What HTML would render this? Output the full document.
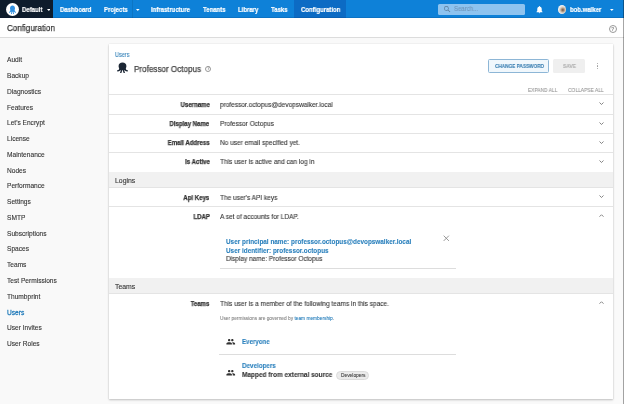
<!DOCTYPE html>
<html><head><meta charset="utf-8">
<style>
*{box-sizing:border-box;margin:0;padding:0}
html,body{width:624px;height:404px;overflow:hidden;background:#f9f9f9;font-family:"Liberation Sans",sans-serif;color:#333;position:relative}
.r{position:absolute}
.t{position:absolute;line-height:1;white-space:nowrap;-webkit-text-stroke:0.1px currentColor;will-change:transform}
</style></head><body>
<div class="r" style="left:0px;top:0px;width:624px;height:18px;background:#0e81d8;"></div>
<div class="r" style="left:0px;top:0px;width:53px;height:18px;background:#0e1c2c;"></div>
<div class="r" style="left:294px;top:0px;width:52px;height:18px;background:#0c6bc4;"></div>
<div class="r" style="left:131.5px;top:0px;width:0.7px;height:18px;background:rgba(0,0,0,0.09);"></div>
<div class="r" style="left:0px;top:17px;width:624px;height:1px;background:rgba(0,20,60,0.12);"></div>
<div class="r" style="left:6.1px;top:3.3px;width:12.9px;height:12.9px;border-radius:50%;background:#fff"></div>
<svg class="r" style="left:9.4px;top:5.0px" width="7.0" height="9.4" viewBox="0 0 20 22" preserveAspectRatio="none"><path fill="#2f8fe0" d="M10 1C5.8 1 2.9 3.8 2.9 7.8c0 2.6 1 4 1.6 5.4L5 16H15l.5-2.8c.6-1.4 1.6-2.8 1.6-5.4C17.1 3.8 14.2 1 10 1z"/><g fill="none" stroke="#2f8fe0" stroke-width="2.5" stroke-linecap="round"><path d="M5.2 13c0 2.6-1.4 3.8-4 4"/><path d="M8.2 14c0 3-.4 4.8-1.3 6.5"/><path d="M11.8 14c0 3 .4 4.8 1.3 6.5"/><path d="M14.8 13c0 2.6 1.4 3.8 4 4"/></g></svg>
<div class="t" style="left:22.00px;top:5.67px;font-size:7px;font-weight:bold;color:#fff;transform:scaleX(0.857);transform-origin:left center;-webkit-text-stroke:0.2px #fff;">Default</div>
<svg class="r" style="left:46.5px;top:8.6px" width="3.6" height="2.0" viewBox="0 0 10 5.5"><path d="M0 0h10L5 5.5z" fill="#fff"/></svg>
<div class="t" style="left:59.60px;top:5.77px;font-size:7px;font-weight:bold;color:#fff;transform:scaleX(0.857);transform-origin:left center;-webkit-text-stroke:0.2px #fff;">Dashboard</div>
<div class="t" style="left:103.60px;top:5.77px;font-size:7px;font-weight:bold;color:#fff;transform:scaleX(0.857);transform-origin:left center;-webkit-text-stroke:0.2px #fff;">Projects</div>
<div class="t" style="left:150.80px;top:5.77px;font-size:7px;font-weight:bold;color:#fff;transform:scaleX(0.857);transform-origin:left center;-webkit-text-stroke:0.2px #fff;">Infrastructure</div>
<div class="t" style="left:203.00px;top:5.77px;font-size:7px;font-weight:bold;color:#fff;transform:scaleX(0.857);transform-origin:left center;-webkit-text-stroke:0.2px #fff;">Tenants</div>
<div class="t" style="left:238.30px;top:5.77px;font-size:7px;font-weight:bold;color:#fff;transform:scaleX(0.857);transform-origin:left center;-webkit-text-stroke:0.2px #fff;">Library</div>
<div class="t" style="left:271.20px;top:5.77px;font-size:7px;font-weight:bold;color:#fff;transform:scaleX(0.857);transform-origin:left center;-webkit-text-stroke:0.2px #fff;">Tasks</div>
<div class="t" style="left:300.80px;top:5.77px;font-size:7px;font-weight:bold;color:#fff;transform:scaleX(0.857);transform-origin:left center;-webkit-text-stroke:0.2px #fff;">Configuration</div>
<svg class="r" style="left:136.2px;top:8.6px" width="3.6" height="2.0" viewBox="0 0 10 5.5"><path d="M0 0h10L5 5.5z" fill="#fff"/></svg>
<div class="r" style="left:438.3px;top:3.5px;width:86.6px;height:11.7px;background:#8ec3ef;border-radius:1.5px;"></div>
<svg class="r" style="left:442.6px;top:4.9px" width="8.6" height="8.6" viewBox="0 0 24 24"><path fill="#587a98" d="M15.5 14h-.79l-.28-.27A6.47 6.47 0 0 0 16 9.5 6.5 6.5 0 1 0 9.5 16c1.61 0 3.09-.59 4.23-1.57l.27.28v.79l5 4.99L20.49 19l-4.99-5zm-6 0C7.01 14 5 11.99 5 9.5S7.01 5 9.5 5 14 7.01 14 9.5 11.99 14 9.5 14z"/></svg>
<div class="t" style="left:454.00px;top:6.31px;font-size:6.6px;font-weight:normal;color:#6e95ba;transform:scaleX(0.91);transform-origin:left center;">Search...</div>
<svg class="r" style="left:535px;top:5.3px" width="9" height="9" viewBox="0 0 24 24"><path fill="#fff" d="M12 22c1.1 0 2-.9 2-2h-4c0 1.1.89 2 2 2zm6-6v-5c0-3.07-1.64-5.64-4.5-6.32V4c0-.83-.67-1.5-1.5-1.5s-1.5.67-1.5 1.5v.68C7.63 5.36 6 7.92 6 11v5l-2 2v1h16v-1l-2-2z"/></svg>
<div class="r" style="left:557.6px;top:4.6px;width:8.6px;height:9.2px;border-radius:50%;background:radial-gradient(circle at 60% 55%,#6b5243 0,#a08670 18%,#d8cbbb 40%,#eef1f4 62%,#e4ecf3 100%)"></div>
<div class="t" style="left:569.50px;top:5.77px;font-size:7px;font-weight:bold;color:#fff;transform:scaleX(0.857);transform-origin:left center;-webkit-text-stroke:0.2px #fff;">bob.walker</div>
<svg class="r" style="left:610.4px;top:8.8px" width="3.6" height="2.0" viewBox="0 0 10 5.5"><path d="M0 0h10L5 5.5z" fill="#fff"/></svg>
<div class="r" style="left:0px;top:18px;width:624px;height:19px;background:#fff;"></div>
<div class="r" style="left:0px;top:36.5px;width:624px;height:1px;background:#dcdcdc;"></div>
<div class="t" style="left:6.70px;top:24.15px;font-size:8.8px;font-weight:normal;color:#333;transform:scaleX(0.915);transform-origin:left center;-webkit-text-stroke:0.25px #333;">Configuration</div>
<div class="r" style="left:608.6px;top:24.8px;width:8px;height:8px;border-radius:50%;border:0.75px solid #999"></div>
<div class="t" style="left:610.90px;top:26.54px;font-size:5.5px;font-weight:bold;color:#999;">?</div>
<div class="t" style="left:6.80px;top:57.21px;font-size:6.6px;font-weight:normal;color:#333;">Audit</div>
<div class="t" style="left:6.80px;top:72.98px;font-size:6.6px;font-weight:normal;color:#333;">Backup</div>
<div class="t" style="left:6.80px;top:88.75px;font-size:6.6px;font-weight:normal;color:#333;">Diagnostics</div>
<div class="t" style="left:6.80px;top:104.52px;font-size:6.6px;font-weight:normal;color:#333;">Features</div>
<div class="t" style="left:6.80px;top:120.29px;font-size:6.6px;font-weight:normal;color:#333;">Let's Encrypt</div>
<div class="t" style="left:6.80px;top:136.06px;font-size:6.6px;font-weight:normal;color:#333;">License</div>
<div class="t" style="left:6.80px;top:151.83px;font-size:6.6px;font-weight:normal;color:#333;">Maintenance</div>
<div class="t" style="left:6.80px;top:167.60px;font-size:6.6px;font-weight:normal;color:#333;">Nodes</div>
<div class="t" style="left:6.80px;top:183.37px;font-size:6.6px;font-weight:normal;color:#333;">Performance</div>
<div class="t" style="left:6.80px;top:199.14px;font-size:6.6px;font-weight:normal;color:#333;">Settings</div>
<div class="t" style="left:6.80px;top:214.91px;font-size:6.6px;font-weight:normal;color:#333;">SMTP</div>
<div class="t" style="left:6.80px;top:230.68px;font-size:6.6px;font-weight:normal;color:#333;">Subscriptions</div>
<div class="t" style="left:6.80px;top:246.45px;font-size:6.6px;font-weight:normal;color:#333;">Spaces</div>
<div class="t" style="left:6.80px;top:262.22px;font-size:6.6px;font-weight:normal;color:#333;">Teams</div>
<div class="t" style="left:6.80px;top:277.99px;font-size:6.6px;font-weight:normal;color:#333;">Test Permissions</div>
<div class="t" style="left:6.80px;top:293.76px;font-size:6.6px;font-weight:normal;color:#333;">Thumbprint</div>
<div class="t" style="left:6.80px;top:309.53px;font-size:6.6px;font-weight:normal;color:#2b80bd;-webkit-text-stroke:0.3px #2b80bd;">Users</div>
<div class="t" style="left:6.80px;top:325.30px;font-size:6.6px;font-weight:normal;color:#333;">User Invites</div>
<div class="t" style="left:6.80px;top:341.07px;font-size:6.6px;font-weight:normal;color:#333;">User Roles</div>
<div class="r" style="left:613px;top:37.5px;width:10px;height:366.5px;background:#fafafa;"></div>
<div class="r" style="left:108.5px;top:44.3px;width:504.5px;height:354.7px;background:#fff;box-shadow:0 1px 2px rgba(0,0,0,0.22),0 0 1px rgba(0,0,0,0.12)"></div>
<div class="t" style="left:114.80px;top:51.80px;font-size:6.5px;font-weight:normal;color:#3481b8;transform:scaleX(0.85);transform-origin:left center;">Users</div>
<svg class="r" style="left:116.6px;top:62.0px" width="11" height="11.4" viewBox="0 0 20 22" preserveAspectRatio="none"><path fill="#1c2735" d="M10 1C5.8 1 2.9 3.8 2.9 7.8c0 2.6 1 4 1.6 5.4L5 16H15l.5-2.8c.6-1.4 1.6-2.8 1.6-5.4C17.1 3.8 14.2 1 10 1z"/><g fill="none" stroke="#1c2735" stroke-width="2.5" stroke-linecap="round"><path d="M5.2 13c0 2.6-1.4 3.8-4 4"/><path d="M8.2 14c0 3-.4 4.8-1.3 6.5"/><path d="M11.8 14c0 3 .4 4.8 1.3 6.5"/><path d="M14.8 13c0 2.6 1.4 3.8 4 4"/></g></svg>
<div class="t" style="left:134.40px;top:65.35px;font-size:8.8px;font-weight:normal;color:#444;transform:scaleX(0.92);transform-origin:left center;-webkit-text-stroke:0.25px #444;">Professor Octopus</div>
<div class="r" style="left:204.7px;top:66px;width:6.4px;height:6.4px;border-radius:50%;border:0.7px solid #999"></div>
<div class="t" style="left:206.50px;top:67.49px;font-size:4.5px;font-weight:bold;color:#999;">?</div>
<div class="r" style="left:487.9px;top:59px;width:61.5px;height:14.3px;background:#f0f7fc;border:0.9px solid #8db6d6;border-radius:1.5px"></div>
<div class="t" style="left:494.60px;top:63.66px;font-size:5.6px;font-weight:bold;color:#3a7fb2;transform:scaleX(0.84);transform-origin:left center;">CHANGE PASSWORD</div>
<div class="r" style="left:553px;top:59px;width:31.6px;height:14.3px;background:#efefef;border-radius:1.5px"></div>
<div class="t" style="left:562.70px;top:63.66px;font-size:5.6px;font-weight:bold;color:#b0b0b0;transform:scaleX(0.88);transform-origin:left center;">SAVE</div>
<div class="r" style="left:596.5px;top:62.8px;width:1.2px;height:1.2px;border-radius:50%;background:#999"></div>
<div class="r" style="left:596.5px;top:65.39999999999999px;width:1.2px;height:1.2px;border-radius:50%;background:#999"></div>
<div class="r" style="left:596.5px;top:68.0px;width:1.2px;height:1.2px;border-radius:50%;background:#999"></div>
<div class="t" style="left:527.90px;top:88.26px;font-size:5.6px;font-weight:normal;color:#999;transform:scaleX(0.867);transform-origin:left center;">EXPAND ALL</div>
<div class="t" style="left:567.60px;top:88.26px;font-size:5.6px;font-weight:normal;color:#999;transform:scaleX(0.877);transform-origin:left center;">COLLAPSE ALL</div>
<div class="r" style="left:108.5px;top:94px;width:504.5px;height:1px;background:#e4e4e4;"></div>
<div class="t" style="right:414.30px;top:101.61px;font-size:6.6px;font-weight:bold;color:#333;transform:scaleX(0.92);transform-origin:right center;-webkit-text-stroke:0.25px #333;">Username</div>
<div class="t" style="left:220.00px;top:101.27px;font-size:7px;font-weight:normal;color:#333;transform:scaleX(0.93);transform-origin:left center;">professor.octopus@devopswalker.local</div>
<div class="r" style="left:108.5px;top:114px;width:504.5px;height:1px;background:#e4e4e4;"></div>
<svg class="r" style="left:599.3px;top:102.4px;transform:none" width="5" height="3.2" viewBox="0 0 10 6.4"><path d="M1 1l4 4 4-4" fill="none" stroke="#666" stroke-width="1.6"/></svg>
<div class="t" style="right:414.30px;top:120.51px;font-size:6.6px;font-weight:bold;color:#333;transform:scaleX(0.92);transform-origin:right center;-webkit-text-stroke:0.25px #333;">Display Name</div>
<div class="t" style="left:220.00px;top:120.17px;font-size:7px;font-weight:normal;color:#333;transform:scaleX(0.93);transform-origin:left center;">Professor Octopus</div>
<div class="r" style="left:108.5px;top:133px;width:504.5px;height:1px;background:#e4e4e4;"></div>
<svg class="r" style="left:599.3px;top:122.4px;transform:none" width="5" height="3.2" viewBox="0 0 10 6.4"><path d="M1 1l4 4 4-4" fill="none" stroke="#666" stroke-width="1.6"/></svg>
<div class="t" style="right:414.30px;top:139.71px;font-size:6.6px;font-weight:bold;color:#333;transform:scaleX(0.92);transform-origin:right center;-webkit-text-stroke:0.25px #333;">Email Address</div>
<div class="t" style="left:220.00px;top:139.37px;font-size:7px;font-weight:normal;color:#333;transform:scaleX(0.93);transform-origin:left center;">No user email specified yet.</div>
<div class="r" style="left:108.5px;top:152px;width:504.5px;height:1px;background:#e4e4e4;"></div>
<svg class="r" style="left:599.3px;top:141.4px;transform:none" width="5" height="3.2" viewBox="0 0 10 6.4"><path d="M1 1l4 4 4-4" fill="none" stroke="#666" stroke-width="1.6"/></svg>
<div class="t" style="right:414.30px;top:158.81px;font-size:6.6px;font-weight:bold;color:#333;transform:scaleX(0.92);transform-origin:right center;-webkit-text-stroke:0.25px #333;">Is Active</div>
<div class="t" style="left:220.00px;top:158.47px;font-size:7px;font-weight:normal;color:#333;transform:scaleX(0.93);transform-origin:left center;">This user is active and can log in</div>
<div class="r" style="left:108.5px;top:171.5px;width:504.5px;height:1px;background:#e4e4e4;"></div>
<svg class="r" style="left:599.3px;top:160.4px;transform:none" width="5" height="3.2" viewBox="0 0 10 6.4"><path d="M1 1l4 4 4-4" fill="none" stroke="#666" stroke-width="1.6"/></svg>
<div class="r" style="left:108.5px;top:171.5px;width:504.5px;height:16px;background:#f1f1f1;"></div>
<div class="r" style="left:108.5px;top:187px;width:504.5px;height:1px;background:#e4e4e4;"></div>
<div class="t" style="left:115.20px;top:177.76px;font-size:6.9px;font-weight:normal;color:#333;">Logins</div>
<div class="t" style="right:414.30px;top:194.71px;font-size:6.6px;font-weight:bold;color:#333;transform:scaleX(0.92);transform-origin:right center;-webkit-text-stroke:0.25px #333;">Api Keys</div>
<div class="t" style="left:220.00px;top:194.07px;font-size:7px;font-weight:normal;color:#333;transform:scaleX(0.93);transform-origin:left center;">The user's API keys</div>
<svg class="r" style="left:599.3px;top:195.4px;transform:none" width="5" height="3.2" viewBox="0 0 10 6.4"><path d="M1 1l4 4 4-4" fill="none" stroke="#666" stroke-width="1.6"/></svg>
<div class="r" style="left:108.5px;top:206px;width:504.5px;height:1px;background:#e4e4e4;"></div>
<div class="t" style="right:414.30px;top:213.81px;font-size:6.6px;font-weight:bold;color:#333;transform:scaleX(0.92);transform-origin:right center;-webkit-text-stroke:0.25px #333;">LDAP</div>
<div class="t" style="left:220.00px;top:213.07px;font-size:7px;font-weight:normal;color:#333;transform:scaleX(0.93);transform-origin:left center;">A set of accounts for LDAP.</div>
<svg class="r" style="left:599.3px;top:213.9px;transform:rotate(180deg)" width="5" height="3.2" viewBox="0 0 10 6.4"><path d="M1 1l4 4 4-4" fill="none" stroke="#666" stroke-width="1.6"/></svg>
<div class="t" style="left:226.00px;top:239.18px;font-size:6.4px;font-weight:bold;color:#2b80bd;">User principal name: professor.octopus@devopswalker.local</div>
<div class="t" style="left:226.00px;top:247.58px;font-size:6.4px;font-weight:bold;color:#2b80bd;">User identifier: professor.octopus</div>
<div class="t" style="left:226.00px;top:255.07px;font-size:7px;font-weight:normal;color:#333;transform:scaleX(0.925);transform-origin:left center;">Display name: Professor Octopus</div>
<svg class="r" style="left:443.4px;top:235px" width="6.6" height="6.6" viewBox="0 0 10 10"><path d="M1 1l8 8M9 1l-8 8" stroke="#888" stroke-width="1.3"/></svg>
<div class="r" style="left:219.6px;top:268px;width:236.00000000000003px;height:1px;background:#dddddd;"></div>
<div class="r" style="left:108.5px;top:277.5px;width:504.5px;height:1px;background:#e4e4e4;"></div>
<div class="r" style="left:108.5px;top:278.3px;width:504.5px;height:15px;background:#f1f1f1;"></div>
<div class="r" style="left:108.5px;top:293px;width:504.5px;height:1px;background:#e4e4e4;"></div>
<div class="t" style="left:115.30px;top:283.76px;font-size:6.9px;font-weight:normal;color:#333;">Teams</div>
<div class="t" style="right:414.30px;top:300.81px;font-size:6.6px;font-weight:bold;color:#333;transform:scaleX(0.92);transform-origin:right center;-webkit-text-stroke:0.25px #333;">Teams</div>
<div class="t" style="left:220.00px;top:300.07px;font-size:7px;font-weight:normal;color:#333;transform:scaleX(0.93);transform-origin:left center;">This user is a member of the following teams in this space.</div>
<svg class="r" style="left:599.3px;top:300.9px;transform:rotate(180deg)" width="5" height="3.2" viewBox="0 0 10 6.4"><path d="M1 1l4 4 4-4" fill="none" stroke="#666" stroke-width="1.6"/></svg>
<div class="t" style="left:220.10px;top:316.74px;font-size:4.8px;font-weight:normal;color:#888;">User permissions are governed by <span style="color:#2b80bd">team membership</span>.</div>
<svg class="r" style="left:226.1px;top:336.5px" width="9.5" height="9.5" viewBox="0 0 24 24"><path fill="#333" d="M16 11c1.66 0 2.99-1.34 2.99-3S17.66 5 16 5c-1.66 0-3 1.34-3 3s1.34 3 3 3zm-8 0c1.66 0 2.99-1.34 2.99-3S9.66 5 8 5C6.34 5 5 6.34 5 8s1.34 3 3 3zm0 2c-2.33 0-7 1.17-7 3.5V19h14v-2.5c0-2.33-4.670-3.5-7-3.5zm8 0c-.29 0-.62.02-.97.05 1.16.84 1.97 1.97 1.97 3.45V19h6v-2.5c0-2.33-4.67-3.5-7-3.5z"/></svg>
<div class="t" style="left:241.90px;top:338.76px;font-size:6.9px;font-weight:bold;color:#2b80bd;transform:scaleX(0.89);transform-origin:left center;">Everyone</div>
<div class="r" style="left:219.4px;top:354px;width:236.6px;height:1px;background:#dddddd;"></div>
<div class="t" style="left:242.00px;top:362.96px;font-size:6.9px;font-weight:bold;color:#2b80bd;transform:scaleX(0.91);transform-origin:left center;">Developers</div>
<svg class="r" style="left:226.1px;top:367.5px" width="9.5" height="9.5" viewBox="0 0 24 24"><path fill="#333" d="M16 11c1.66 0 2.99-1.34 2.99-3S17.66 5 16 5c-1.66 0-3 1.34-3 3s1.34 3 3 3zm-8 0c1.66 0 2.99-1.34 2.99-3S9.66 5 8 5C6.34 5 5 6.34 5 8s1.34 3 3 3zm0 2c-2.33 0-7 1.17-7 3.5V19h14v-2.5c0-2.33-4.670-3.5-7-3.5zm8 0c-.29 0-.62.02-.97.05 1.16.84 1.97 1.97 1.97 3.45V19h6v-2.5c0-2.33-4.67-3.5-7-3.5z"/></svg>
<div class="t" style="left:242.00px;top:371.76px;font-size:6.9px;font-weight:bold;color:#333;transform:scaleX(0.94);transform-origin:left center;">Mapped from external source</div>
<div class="r" style="left:336px;top:371px;width:33px;height:9px;border-radius:4.5px;background:#ebebeb;border:0.6px solid #dcdcdc"></div>
<div class="t" style="left:340.50px;top:373.79px;font-size:4.85px;font-weight:normal;color:#444;">Developers</div>
<div class="r" style="left:623px;top:0px;width:1px;height:404px;background:rgba(0,0,0,0.35);"></div>
</body></html>
